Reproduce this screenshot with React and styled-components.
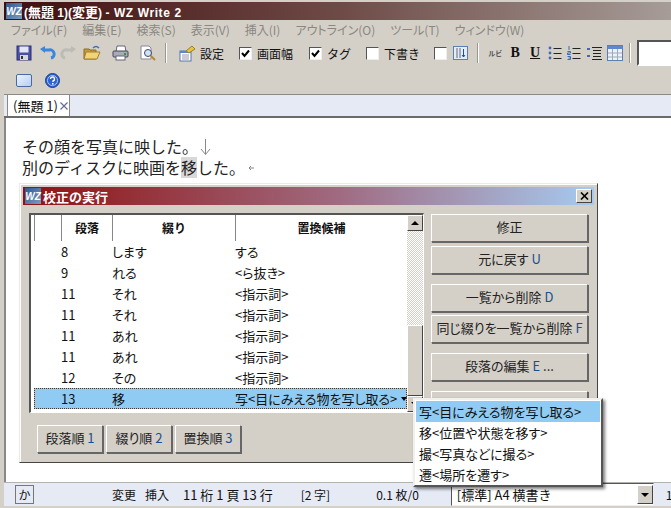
import React from 'react'
import styled, { createGlobalStyle } from 'styled-components'

const Global = createGlobalStyle`
  html, body { margin: 0; padding: 0; height: 100%; overflow: hidden; background: #fff; }
  * { box-sizing: border-box; }
`

const FONT = `"Noto Sans CJK JP", "Liberation Sans", sans-serif`

const Window = styled.div`
  width: 671px;
  height: 508px;
  background: #d4d0c8;
  border-left: 4px solid #d4d0c8;
  padding-top: 2px;
  font-family: ${FONT};
  font-feature-settings: "palt";
  font-size: 13px;
  color: #111;
  display: flex;
  flex-direction: column;
  position: relative;
  overflow: hidden;
`
const TitleBar = styled.div`
  height: 18px;
  flex: none;
  background: linear-gradient(to right, #3f0d0d, #6e4a46 50%, #a69c98);
  color: #fff;
  font-weight: bold;
  font-size: 13px;
  font-feature-settings: normal;
  display: flex;
  align-items: center;
  gap: 2px;
  white-space: pre;
`
const TitleLatin = styled.span`
  font-family: "Liberation Sans", sans-serif;
  font-size: 12px;
  letter-spacing: ${p => p.$spread || 0}px;
`
const Logo = styled.div`
  width: 16px;
  height: 16px;
  flex: none;
  margin-left: 2px;
  background: linear-gradient(135deg, #2c5a94, #7f9cbd);
  color: #fff;
  font: italic bold 10px "Liberation Sans", sans-serif;
  display: flex;
  align-items: center;
  justify-content: center;
`
const MenuBar = styled.div`
  height: 19px;
  flex: none;
  display: flex;
  align-items: center;
  padding-left: 7px;
  gap: 15px;
  font-size: 12px;
  color: #8a8780;
`
const ToolRow = styled.div`
  height: 28px;
  flex: none;
  display: flex;
  align-items: center;
  padding-left: 6px;
  white-space: nowrap;
  overflow: hidden;
`
const SecondRow = styled(ToolRow)`
  height: 27px;
`
const Tool = styled.span`
  width: 28px;
  height: 20px;
  flex: none;
  display: flex;
  align-items: center;
  justify-content: center;
`
const SmallTool = styled(Tool)`
  width: ${p => p.$w || 20}px;
`
const Sep = styled.span`
  width: 2px;
  height: 20px;
  flex: none;
  margin: 0 ${p => p.$r}px 0 ${p => p.$l}px;
  background: #9a978f;
  border-right: 1px solid #fff;
`
const CheckLabel = styled.label`
  display: flex;
  align-items: center;
  gap: 5px;
  font-size: 12px;
  font-feature-settings: normal;
  margin-left: ${p => p.$ml || 0}px;
  margin-right: ${p => p.$mr}px;
`
const Check = styled.span`
  width: 13px;
  height: 13px;
  flex: none;
  background: #fff;
  border: 1px solid;
  border-color: #555 #eee #eee #555;
  display: flex;
  align-items: center;
  justify-content: center;
`
const RubyMark = styled.span`
  font-size: 7px;
  font-weight: 700;
  color: #555;
`
const StyleMark = styled.span`
  font: 900 14px "Liberation Serif", serif;
  text-decoration: ${p => (p.$under ? 'underline' : 'none')};
`
const SizeField = styled.div`
  width: 40px;
  height: 26px;
  flex: none;
  margin-left: 5px;
  background: #fff;
  border: 2px solid;
  border-color: #555 #fff #fff #555;
`
const TabStrip = styled.div`
  height: 24px;
  flex: none;
  background: #e6eaf5;
  border-top: 1px solid #8b8985;
  border-bottom: 2px solid #6d6b68;
  padding-left: 3px;
  display: flex;
`
const Tab = styled.div`
  width: 63px;
  background: #fff;
  border-left: 1px solid #8b8985;
  border-right: 1px solid #8b8985;
  display: flex;
  align-items: center;
  padding-left: 5px;
  font-size: 13px;
  font-feature-settings: normal;
  white-space: pre;
`
const TabClose = styled.svg`
  margin-left: 2px;
  flex: none;
`
const Editor = styled.div`
  flex: 1;
  background: #fff;
  border-left: 2px solid #8b8985;
  padding: 18px 0 0 16px;
  font-size: 16px;
  font-feature-settings: normal;
  color: #222;
`
const EdLine = styled.div`
  display: flex;
  align-items: center;
  height: 21px;
  line-height: 21px;
  white-space: nowrap;
`
const Mark = styled.span`
  background: #d8d8d8;
`
const RetMark = styled.svg`
  flex: none;
  margin-left: ${p => p.$ml}px;
`
const StatusBar = styled.div`
  height: 24px;
  flex: none;
  margin-bottom: 2px;
  background: #e6eaf5;
  border-top: 1px solid #b5b3ae;
  display: flex;
  align-items: center;
  font-size: 12px;
  font-feature-settings: normal;
  padding-left: 11px;
  white-space: nowrap;
  overflow: hidden;
`
const ImeBox = styled.span`
  width: 19px;
  height: 19px;
  flex: none;
  border: 1px solid #777;
  display: flex;
  align-items: center;
  justify-content: center;
  margin-right: 78px;
`
const StatusItem = styled.span`
  flex: none;
  font-size: ${p => p.$size || 12}px;
  margin-right: ${p => p.$mr || 0}px;
`
const PageSelect = styled.div`
  width: 203px;
  height: 23px;
  flex: none;
  margin-right: 12px;
  background: #fff;
  border: 1px solid;
  border-color: #555 #eee #eee #555;
  display: flex;
  align-items: center;
  justify-content: space-between;
  padding-left: 5px;
  font-size: 13px;
`
const ArrowBtn = styled.span`
  width: 16px;
  height: 19px;
  background: #d4d0c8;
  border: 1px solid;
  border-color: #fff #444 #444 #fff;
  display: flex;
  align-items: center;
  justify-content: center;
`
const Tri = styled.span`
  width: 0;
  height: 0;
  border-left: ${p => (p.$small ? 3 : 4)}px solid transparent;
  border-right: ${p => (p.$small ? 3 : 4)}px solid transparent;
  border-${p => (p.$up ? 'bottom' : 'top')}: 4px solid #000;
`
const Dialog = styled.div`
  position: absolute;
  left: 15px;
  top: 183px;
  width: 579px;
  height: 280px;
  background: #d4d0c8;
  border: 1px solid;
  border-color: #eceae5 #444 #444 #eceae5;
  box-shadow: inset 1px 1px 0 #fff;
  padding: 3px 3px 0 3px;
  display: flex;
  flex-direction: column;
`
const DialogTitle = styled.div`
  height: 18px;
  flex: none;
  background: linear-gradient(to right, #8f1111, #a06a80 55%, #a6caf0);
  color: #fff;
  font-weight: bold;
  font-size: 13px;
  font-feature-settings: normal;
  display: flex;
  align-items: center;
  gap: 2px;
`
const CloseBtn = styled.span`
  width: 16px;
  height: 14px;
  margin-left: auto;
  margin-right: 2px;
  background: #d4d0c8;
  border: 1px solid;
  border-color: #fff #444 #444 #fff;
  display: flex;
  align-items: center;
  justify-content: center;
`
const DialogBody = styled.div`
  flex: 1;
  display: flex;
  padding: 8px 6px 0 6px;
  gap: 7px;
`
const LeftCol = styled.div`
  width: 395px;
  flex: none;
  display: flex;
  flex-direction: column;
`
const RightCol = styled.div`
  flex: 1;
  padding-top: 1px;
  display: flex;
  flex-direction: column;
`
const List = styled.div`
  height: 200px;
  flex: none;
  border-style: solid;
  border-width: 2px 1px 1px 2px;
  border-color: #555 #fff #fff #555;
  background: #fff;
  display: flex;
`
const ListMain = styled.div`
  flex: 1;
  padding-left: 3px;
  display: flex;
  flex-direction: column;
`
const Header = styled.div`
  height: 26px;
  flex: none;
  display: grid;
  grid-template-columns: 27px 51px 123px 1fr;
  font-weight: bold;
  font-size: 12px;
  font-feature-settings: normal;
  text-align: center;
`
const HeadCell = styled.span`
  line-height: 26px;
  border-left: 1px solid #888;
`
const Row = styled.div`
  height: 21px;
  flex: none;
  display: grid;
  grid-template-columns: 78px 123px 1fr;
  align-items: center;
  white-space: nowrap;
  font-size: 13px;
  ${p => p.$active && `
    background: #8fcbf2;
    outline: 1px dotted #5a3010;
    outline-offset: -1px;
  `}
`
const Num = styled.span`
  padding-left: 27px;
`
const CandCell = styled.span`
  position: relative;
  align-self: stretch;
  display: flex;
  align-items: center;
`
const RowArrow = styled.span`
  position: absolute;
  right: 0;
  top: 9px;
  display: flex;
`
const ScrollBar = styled.div`
  width: 16px;
  flex: none;
  display: flex;
  flex-direction: column;
  background: repeating-conic-gradient(#d4d0c8 0 25%, #fff 0 50%) 0 0 / 2px 2px;
`
const ScrollBtn = styled.div`
  height: 16px;
  flex: none;
  background: #d4d0c8;
  border: 1px solid;
  border-color: #fff #444 #444 #fff;
  display: flex;
  align-items: center;
  justify-content: center;
`
const Thumb = styled.div`
  height: 71px;
  flex: none;
  margin-top: auto;
  background: #d4d0c8;
  border: 1px solid;
  border-color: #fff #444 #444 #fff;
`
const SortRow = styled.div`
  display: flex;
  gap: 3px;
  margin-top: 12px;
  padding-left: 8px;
`
const Btn = styled.button`
  font-family: ${FONT};
  font-feature-settings: "palt";
  font-size: 13px;
  color: #222;
  background: #d4d0c8;
  border: 1px solid;
  border-color: #fff #666 #666 #fff;
  box-shadow: 1px 1px 0 #666;
  padding: 0 0 3px;
  flex: none;
  height: 28px;
  width: ${p => (p.$w ? p.$w + 'px' : '100%')};
  margin-bottom: ${p => p.$mb || 0}px;
  white-space: nowrap;
`
const Key = styled.span`
  color: #1a4f8f;
`
const Popup = styled.div`
  position: absolute;
  left: 409px;
  top: 398px;
  width: 190px;
  height: 89px;
  padding: 1px;
  background: #fff;
  border: 2px solid;
  border-color: #f2f0ec #555 #555 #f2f0ec;
  box-shadow: 2px 2px 3px rgba(0, 0, 0, 0.5);
  z-index: 5;
`
const PopItem = styled.div`
  height: 21px;
  line-height: 21px;
  padding-left: 3px;
  font-size: 13px;
  white-space: nowrap;
  background: ${p => (p.$on ? '#8fcbf2' : 'transparent')};
`

const rows = [
  ['8', 'します', 'する'],
  ['9', 'れる', '<ら抜き>'],
  ['11', 'それ', '<指示詞>'],
  ['11', 'それ', '<指示詞>'],
  ['11', 'あれ', '<指示詞>'],
  ['11', 'あれ', '<指示詞>'],
  ['12', 'その', '<指示詞>'],
]

const popItems = ['写<目にみえる物を写し取る>', '移<位置や状態を移す>', '撮<写真などに撮る>', '遷<場所を遷す>']

const Tick = () => (
  <svg width="9" height="9" viewBox="0 0 9 9"><path d="M1 4l2.5 3L8 1.5" fill="none" stroke="#000" strokeWidth="2" /></svg>
)
const SaveIcon = () => (
  <svg width="16" height="16" viewBox="0 0 16 16"><rect x="1" y="1" width="14" height="14" fill="#4a4fa8" stroke="#2a2f70" /><rect x="3.5" y="1.5" width="9" height="6" fill="#e3e5f4" /><rect x="4" y="10" width="8" height="5" fill="#d8d8d8" /><rect x="5" y="11" width="2" height="3" fill="#333" /></svg>
)
const UndoIcon = () => (
  <svg width="16" height="16" viewBox="0 0 16 16"><path d="M4 5h5a4 4 0 0 1 2 8" fill="none" stroke="#3a86dc" strokeWidth="3" /><path d="M0 4l5-3v7z" fill="#3a86dc" /></svg>
)
const RedoIcon = () => (
  <svg width="16" height="16" viewBox="0 0 16 16"><path d="M12 5H7a4 4 0 0 0-2 8" fill="none" stroke="#bdbbb5" strokeWidth="3" /><path d="M16 4l-5-3v7z" fill="#bdbbb5" /></svg>
)
const FolderIcon = () => (
  <svg width="18" height="16" viewBox="0 0 18 16"><path d="M1 4h5l1 1h6v9H1z" fill="#c99a3c" stroke="#8a6a20" /><path d="M3 7h14l-3 7H1z" fill="#f2d377" stroke="#a08030" /><path d="M10 3q3-3 6 0" fill="none" stroke="#3a6cc0" strokeWidth="1.4" /></svg>
)
const PrintIcon = () => (
  <svg width="17" height="16" viewBox="0 0 17 16"><path d="M5 1h8l1 6H4z" fill="#fff" stroke="#667" /><rect x="1" y="6" width="15" height="6" rx="1" fill="#aab" stroke="#445" /><rect x="4" y="11" width="9" height="4" fill="#fff" stroke="#667" /><rect x="12" y="8" width="2" height="2" fill="#2a9a3a" /></svg>
)
const PreviewIcon = () => (
  <svg width="16" height="16" viewBox="0 0 16 16"><path d="M1 1h8l2 2v11H1z" fill="#fff" stroke="#889" /><circle cx="8" cy="8" r="3.5" fill="#cfe4f6" stroke="#446" /><path d="M11 11l4 4" stroke="#b58a2a" strokeWidth="2" /></svg>
)
const SettingIcon = () => (
  <svg width="18" height="17" viewBox="0 0 18 17"><rect x="2" y="6" width="11" height="10" fill="#fff" stroke="#5577aa" /><rect x="2" y="6" width="11" height="2" fill="#5b88c8" /><path d="M4 10h7M4 12h7M4 14h7" stroke="#99a" /><path d="M8 6l6-5 3 3-6 4z" fill="#e8c04a" stroke="#a08020" /></svg>
)
const FrameIcon = () => (
  <svg width="15" height="14" viewBox="0 0 15 14"><rect x="0.5" y="0.5" width="14" height="13" fill="#e4ecf8" stroke="#5a7fb0" /><path d="M4 2v10M7 2v10" stroke="#667" /><path d="M10.5 3v8M9 9l1.5 2L12 9" stroke="#1d4fa8" fill="none" /></svg>
)
const BulletIcon = () => (
  <svg width="14" height="14" viewBox="0 0 14 14"><path d="M5.5 2.5h8M5.5 7.5h8M5.5 12.5h8" stroke="#222" /><circle cx="2" cy="2" r="1.4" fill="#3f68b8" /><circle cx="2" cy="7" r="1.4" fill="#3f68b8" /><circle cx="2" cy="12" r="1.4" fill="#3f68b8" /></svg>
)
const NumberIcon = () => (
  <svg width="14" height="14" viewBox="0 0 14 14"><path d="M5.5 2.5h8M5.5 7.5h8M5.5 12.5h8" stroke="#222" /><path d="M2 0v4M0.5 5.5h3v1.5h-3v1.5h3M0.5 10.5h3v3h-3M1.5 12h2" fill="none" stroke="#3f68b8" /></svg>
)
const IndentIcon = () => (
  <svg width="15" height="14" viewBox="0 0 15 14"><path d="M5 1.5h10M6 4.5h8M6 7.5h8M6 10.5h8M5 13.5h10" stroke="#222" /><rect x="0" y="2" width="3" height="2" fill="#3f68b8" /><rect x="0" y="9" width="3" height="2" fill="#3f68b8" /></svg>
)
const TableIcon = () => (
  <svg width="16" height="16" viewBox="0 0 16 16"><rect x="0.5" y="0.5" width="15" height="15" fill="#eef2f8" stroke="#5a7fb0" /><rect x="1" y="1" width="14" height="3" fill="#5b88d0" /><path d="M1 8h14M1 12h14M5.5 4v11M10.5 4v11" stroke="#9ab" /></svg>
)
const HelpIcon = () => (
  <svg width="15" height="15" viewBox="0 0 15 15"><circle cx="7.5" cy="7.5" r="7" fill="#2b62cc" stroke="#1b3f90" /><circle cx="7.5" cy="7.5" r="5" fill="none" stroke="#a8c4f2" /><path d="M5.5 6a2 2 0 1 1 2.5 2v1" fill="none" stroke="#fff" strokeWidth="1.4" /><rect x="7" y="10" width="1.5" height="1.5" fill="#fff" /></svg>
)
const PanelIcon = () => (
  <svg width="16" height="13" viewBox="0 0 16 13"><defs><linearGradient id="panel" x1="0" y1="0" x2="1" y2="1"><stop offset="0" stopColor="#eef4fc" /><stop offset="1" stopColor="#b4cdf0" /></linearGradient></defs><rect x="0.5" y="0.5" width="15" height="12" rx="1.5" fill="url(#panel)" stroke="#4a6a9e" /></svg>
)
const CloseX = () => (
  <svg width="9" height="8" viewBox="0 0 9 8"><path d="M1 0.5l7 7M8 0.5l-7 7" stroke="#000" strokeWidth="1.6" /></svg>
)

const App = () => {
  return (
    <>
      <Global />
      <Window>
        <TitleBar>
          <Logo>WZ</Logo>
          <span><TitleLatin>(</TitleLatin>無題<TitleLatin> 1)(</TitleLatin>変更<TitleLatin>) </TitleLatin><TitleLatin $spread={0.6}>- WZ Write 2</TitleLatin></span>
        </TitleBar>
        <MenuBar>
          {['ファイル(F)', '編集(E)', '検索(S)', '表示(V)', '挿入(I)', 'アウトライン(O)', 'ツール(T)', 'ウィンドウ(W)'].map(m => <span key={m}>{m}</span>)}
        </MenuBar>
        <ToolRow>
          <Tool><SaveIcon /></Tool>
          <SmallTool><UndoIcon /></SmallTool>
          <SmallTool><RedoIcon /></SmallTool>
          <Tool><FolderIcon /></Tool>
          <Tool><PrintIcon /></Tool>
          <Tool><PreviewIcon /></Tool>
          <Sep $l={3} $r={10} />
          <SmallTool><SettingIcon /></SmallTool>
          <CheckLabel $ml={3} $mr={15}>設定</CheckLabel>
          <CheckLabel $mr={16}><Check><Tick /></Check>画面幅</CheckLabel>
          <CheckLabel $mr={15}><Check><Tick /></Check>タグ</CheckLabel>
          <CheckLabel $mr={14}><Check />下書き</CheckLabel>
          <Check />
          <SmallTool $w={26}><FrameIcon /></SmallTool>
          <Sep $l={4} $r={6} />
          <SmallTool><RubyMark>ルビ</RubyMark></SmallTool>
          <SmallTool><StyleMark>B</StyleMark></SmallTool>
          <SmallTool><StyleMark $under>U</StyleMark></SmallTool>
          <SmallTool $w={19}><BulletIcon /></SmallTool>
          <SmallTool><NumberIcon /></SmallTool>
          <SmallTool $w={21}><IndentIcon /></SmallTool>
          <SmallTool><TableIcon /></SmallTool>
          <Sep $l={4} $r={1} />
          <SizeField />
        </ToolRow>
        <SecondRow>
          <Tool><PanelIcon /></Tool>
          <Tool><HelpIcon /></Tool>
        </SecondRow>
        <TabStrip>
          <Tab>
            (無題 1)
            <TabClose width="8" height="8" viewBox="0 0 8 8"><path d="M0.5 0.5l7 7M7.5 0.5l-7 7" stroke="#666a9a" strokeWidth="1.2" /></TabClose>
          </Tab>
        </TabStrip>
        <Editor>
          <EdLine>
            その顔を写真に映した。
            <RetMark $ml={2} width="11" height="18" viewBox="0 0 11 18"><path d="M5.5 1v15M1 11l4.5 5.5L10 11" fill="none" stroke="#888" /></RetMark>
          </EdLine>
          <EdLine>
            別のディスクに映画を<Mark>移</Mark>した。
            <RetMark $ml={3} width="6" height="6" viewBox="0 0 6 6"><path d="M6 3H1M3 1L1 3l2 2" fill="none" stroke="#888" /></RetMark>
          </EdLine>
        </Editor>
        <StatusBar>
          <ImeBox>か</ImeBox>
          <StatusItem $mr={9}>変更</StatusItem>
          <StatusItem $mr={14}>挿入</StatusItem>
          <StatusItem $mr={28} $size={13}>11 桁 1 頁 13 行</StatusItem>
          <StatusItem $mr={46}>[2 字]</StatusItem>
          <StatusItem $mr={32}>0.1 枚/0</StatusItem>
          <PageSelect>[標準] A4 横書き<ArrowBtn><Tri /></ArrowBtn></PageSelect>
          <StatusItem>1</StatusItem>
        </StatusBar>
        <Dialog>
          <DialogTitle><Logo>WZ</Logo>校正の実行<CloseBtn><CloseX /></CloseBtn></DialogTitle>
          <DialogBody>
            <LeftCol>
              <List>
                <ListMain>
                  <Header>
                    <HeadCell />
                    <HeadCell>段落</HeadCell>
                    <HeadCell>綴り</HeadCell>
                    <HeadCell>置換候補</HeadCell>
                  </Header>
                  {rows.map((r, i) => (
                    <Row key={i}>
                      <Num>{r[0]}</Num>
                      <span>{r[1]}</span>
                      <span>{r[2]}</span>
                    </Row>
                  ))}
                  <Row $active>
                    <Num>13</Num>
                    <span>移</span>
                    <CandCell>写&lt;目にみえる物を写し取る&gt;<RowArrow><Tri $small /></RowArrow></CandCell>
                  </Row>
                </ListMain>
                <ScrollBar>
                  <ScrollBtn><Tri $up /></ScrollBtn>
                  <Thumb />
                  <ScrollBtn><Tri /></ScrollBtn>
                </ScrollBar>
              </List>
              <SortRow>
                <Btn $w={66}>段落順 <Key>1</Key></Btn>
                <Btn $w={66}>綴り順 <Key>2</Key></Btn>
                <Btn $w={66}>置換順 <Key>3</Key></Btn>
              </SortRow>
            </LeftCol>
            <RightCol>
              <Btn $mb={4}>修正</Btn>
              <Btn $mb={10}>元に戻す <Key>U</Key></Btn>
              <Btn $mb={3}>一覧から削除 <Key>D</Key></Btn>
              <Btn $mb={10}>同じ綴りを一覧から削除 <Key>F</Key></Btn>
              <Btn $mb={10}>段落の編集 <Key>E</Key> ...</Btn>
              <Btn />
            </RightCol>
          </DialogBody>
        </Dialog>
        <Popup>
          {popItems.map((p, i) => <PopItem key={p} $on={i === 0}>{p}</PopItem>)}
        </Popup>
      </Window>
    </>
  )
}

export default App
